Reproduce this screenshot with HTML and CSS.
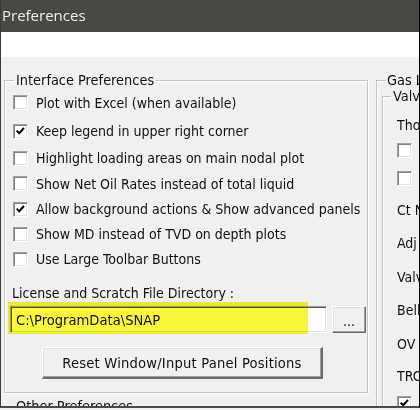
FILE: index.html
```html
<!DOCTYPE html>
<html>
<head>
<meta charset="utf-8">
<title>Preferences</title>
<link rel="stylesheet" href="styles.css">
</head>
<body>
<div class="window">
  <div class="titlebar">Preferences</div>
  <div class="toolband"></div>
  <div class="content">
    <div class="leftcol">
      <fieldset class="group main">
        <legend>Interface Preferences</legend>
        <div class="checks">
          <div class="check"><span class="box"></span><span>Plot with Excel (when available)</span></div>
          <div class="check"><span class="box"><svg viewBox="0 0 15 15"><path d="M3 6.5 L6 9.5 L11.5 3.5" /></svg></span><span>Keep legend in upper right corner</span></div>
          <div class="check"><span class="box"></span><span>Highlight loading areas on main nodal plot</span></div>
          <div class="check"><span class="box"></span><span>Show Net Oil Rates instead of total liquid</span></div>
          <div class="check"><span class="box"><svg viewBox="0 0 15 15"><path d="M3 6.5 L6 9.5 L11.5 3.5" /></svg></span><span>Allow background actions &amp; Show advanced panels</span></div>
          <div class="check"><span class="box"></span><span>Show MD instead of TVD on depth plots</span></div>
          <div class="check"><span class="box"></span><span>Use Large Toolbar Buttons</span></div>
        </div>
        <div class="dirlabel">License and Scratch File Directory :</div>
        <div class="dirrow">
          <div class="textbox">C:\ProgramData\SNAP</div>
          <div class="browse">...</div>
          <span class="highlight"></span>
        </div>
        <div class="resetrow"><div class="btn">Reset Window/Input Panel Positions</div></div>
      </fieldset>
      <fieldset class="group other">
        <legend>Other Preferences</legend>
      </fieldset>
    </div>
    <fieldset class="group gas">
      <legend>Gas L</legend>
      <fieldset class="group valv">
        <legend>Valv</legend>
        <div class="valvrows">
          <div class="vitem">Tho</div>
          <div class="vitem"><span class="box"></span></div>
          <div class="vitem"><span class="box"></span></div>
          <div class="vitem">Ct N</div>
          <div class="vitem">Adj</div>
          <div class="vitem">Valv</div>
          <div class="vitem">Bell</div>
          <div class="vitem">OV</div>
          <div class="vitem">TRC</div>
          <div class="vitem"><span class="box"><svg viewBox="0 0 15 15"><path d="M3 6.5 L6 9.5 L11.5 3.5" /></svg></span></div>
        </div>
      </fieldset>
    </fieldset>
  </div>
</div>
</body>
</html>
```

FILE: styles.css
```css
html, body {
  margin: 0;
  padding: 0;
}

body {
  background: #f0f0f0;
  font-family: "DejaVu Sans Condensed", "DejaVu Sans", sans-serif;
  font-size: 14px;
  color: #111;
}

.window {
  width: 418px;
  height: 406px;
  border-left: 1px solid #3a3a3a;
  border-right: 1px solid #000;
  border-bottom: 2px solid #4a4a4a;
  overflow: hidden;
  display: flex;
  flex-direction: column;
  background: #f0f0f0;
}

.titlebar {
  height: 32px;
  flex-shrink: 0;
  background: #4a4845;
  color: #ececec;
  font-family: "Open Sans", "Noto Sans", sans-serif;
  font-size: 15px;
  line-height: 30px;
  padding-left: 1px;
}

.toolband {
  height: 25px;
  flex-shrink: 0;
  background: #fff;
}

.content {
  flex: 1;
  display: flex;
  align-items: flex-start;
  gap: 8px;
  padding: 15px 0 0 3px;
  min-height: 0;
}

.leftcol {
  width: 364px;
  flex-shrink: 0;
  display: flex;
  flex-direction: column;
}

.group {
  margin: 0;
  padding: 0;
  min-width: 0;
  border: 1px solid #c4c4c4;
  box-shadow: inset 1px 1px 0 #fff, 1px 1px 0 #fff;
}

.group legend {
  padding: 0 2px;
  font-size: 14.4px;
  line-height: 16px;
}

.main {
  padding: 0 0 13px 8px;
}

.main legend {
  margin-left: 1px;
}

.checks {
  display: grid;
  grid-template-rows: 29px 28px 26px 25.5px 25px 25px 25.5px;
  align-items: center;
}

.check {
  display: flex;
  align-items: center;
  gap: 8px;
  white-space: nowrap;
}

.box {
  width: 15px;
  height: 15px;
  box-sizing: border-box;
  background: #fff;
  border-top: 1px solid #a0a0a0;
  border-left: 1px solid #a0a0a0;
  border-right: 1px solid #fff;
  border-bottom: 1px solid #fff;
  box-shadow: inset 1px 1px 0 #808080, inset -1px -1px 0 #e3e3e3;
  display: inline-flex;
  align-items: center;
  justify-content: center;
  flex-shrink: 0;
}

.box svg {
  width: 13px;
  height: 13px;
}

.box path {
  fill: none;
  stroke: #000;
  stroke-width: 2.4;
}

.dirlabel {
  margin-top: 12px;
  margin-left: -1px;
  line-height: 18px;
  white-space: nowrap;
}

.dirrow {
  position: relative;
  display: flex;
  gap: 5px;
  padding-top: 4px;
  margin-left: -3px;
}

.textbox {
  width: 317px;
  height: 27px;
  box-sizing: border-box;
  background: #fff;
  border-top: 1px solid #a0a0a0;
  border-left: 1px solid #a0a0a0;
  border-right: 1px solid #fff;
  border-bottom: 1px solid #fff;
  box-shadow: inset 1px 1px 0 #5a5a5a, inset -1px -1px 0 #e3e3e3;
  padding-left: 5px;
  font-size: 14.6px;
  line-height: 25px;
  white-space: nowrap;
}

.browse {
  width: 34px;
  height: 27px;
  box-sizing: border-box;
  background: #f0f0f0;
  border-top: 1px solid #fff;
  border-left: 1px solid #fff;
  border-right: 1px solid #696969;
  border-bottom: 1px solid #696969;
  box-shadow: inset -1px -1px 0 #a0a0a0, inset 1px 1px 0 #e3e3e3;
  text-align: center;
  line-height: 28px;
}

.highlight {
  position: absolute;
  left: -2px;
  top: 0;
  width: 300px;
  height: 32px;
  background: #f7f73a;
  mix-blend-mode: multiply;
}

.resetrow {
  margin-top: 14px;
  padding-left: 29px;
}

.btn {
  width: 281px;
  height: 32px;
  box-sizing: border-box;
  background: #f0f0f0;
  border-top: 1px solid #fff;
  border-left: 1px solid #fff;
  border-right: 2px solid #696969;
  border-bottom: 2px solid #696969;
  box-shadow: inset -1px -1px 0 #a0a0a0, inset 1px 1px 0 #e3e3e3;
  text-align: center;
  font-size: 14.6px;
  line-height: 29px;
  letter-spacing: 0.2px;
  white-space: nowrap;
}

.other {
  margin-top: 5px;
  padding: 0 0 20px 8px;
}

.other legend {
  margin-left: 1px;
}

.gas {
  width: 100px;
  flex-shrink: 0;
  padding: 0 0 40px 5px;
}

.gas legend {
  margin-left: 3px;
  white-space: nowrap;
}

.valv {
  padding: 0 0 0 8px;
}

.valv legend {
  margin-left: 0;
  white-space: nowrap;
}

.valvrows {
  display: grid;
  grid-template-rows: 25px 26.5px 30px 33px 33.5px 33.5px 33.5px 34px 29px 26px;
  align-items: center;
  padding-top: 8px;
  padding-left: 6px;
}

.vitem {
  display: flex;
  align-items: center;
  white-space: nowrap;
}
```
